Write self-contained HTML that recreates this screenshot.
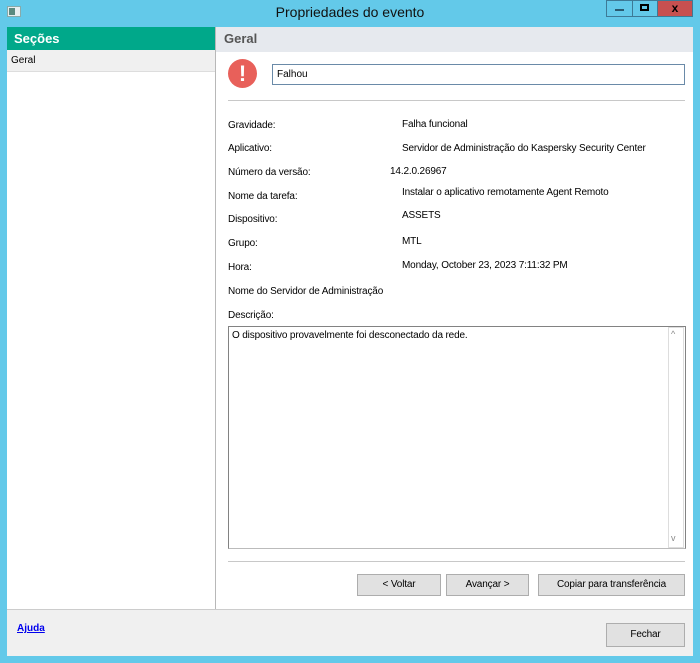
<!DOCTYPE html>
<html><head><meta charset="utf-8"><style>
*{margin:0;padding:0;box-sizing:border-box}
body{width:700px;height:663px;background:#63c9e9;position:relative;overflow:hidden;font-family:"Liberation Sans",sans-serif;font-size:11px;color:#000}
.a{position:absolute}
.t{position:absolute;font-size:10px;white-space:nowrap;letter-spacing:-0.15px}
.btn{position:absolute;background:#e1e1e1;border:1px solid #adadad;text-align:center;font-size:10px;line-height:20px;letter-spacing:-0.15px}
</style></head><body>
<div class="a" style="left:7px;top:6px;width:14px;height:11px;background:#e8eef0;border:1px solid #8aa"></div>
<div class="a" style="left:9px;top:8px;width:6px;height:7px;background:#5a8a80"></div>
<div class="a" style="left:0;top:4px;width:700px;text-align:center;font-size:14px;color:#111">Propriedades do evento</div>
<div class="a" style="left:606px;top:0;width:27px;height:17px;border:1px solid #3d7a96;background:#63c9e9"></div>
<div class="a" style="left:615px;top:9px;width:9px;height:2px;background:#2a5a70"></div>
<div class="a" style="left:632px;top:0;width:26px;height:17px;border:1px solid #3d7a96;background:#63c9e9"></div>
<div class="a" style="left:640px;top:4px;width:9px;height:7px;border:2px solid #000"></div>
<div class="a" style="left:657px;top:0;width:36px;height:17px;background:#c75050;border:1px solid #3d7a96;text-align:center;font-weight:bold;font-size:12px;line-height:15px">x</div>

<div class="a" style="left:7px;top:27px;width:686px;height:629px;background:#fff"></div>
<div class="a" style="left:7px;top:27px;width:208px;height:23px;background:#00a88a;color:#fff;font-weight:bold;font-size:13px;padding:4px 0 0 7px">Seções</div>
<div class="a" style="left:7px;top:50px;width:208px;height:22px;background:#f0f0f0;border-bottom:1px solid #ddd;padding:5px 0 0 4px;font-size:10px">Geral</div>
<div class="a" style="left:215px;top:27px;width:1px;height:583px;background:#b8b8b8"></div>
<div class="a" style="left:216px;top:27px;width:477px;height:25px;background:#e6e9ee;color:#555;font-weight:bold;font-size:13px;padding:4px 0 0 8px">Geral</div>

<div class="a" style="left:228px;top:59px;width:29px;height:29px;border-radius:50%;background:#e8605a;color:#fff;font-weight:bold;font-size:22px;text-align:center;line-height:29px">!</div>
<div class="a" style="left:272px;top:64px;width:413px;height:21px;border:1px solid #6a8aa8;padding:4px 0 0 4px;font-size:10px">Falhou</div>
<div class="a" style="left:228px;top:100px;width:457px;height:1px;background:#c8c8c8"></div>

<div class="t" style="left:228px;top:120px">Gravidade:</div><div class="t" style="left:402px;top:119px">Falha funcional</div>
<div class="t" style="left:228px;top:143px">Aplicativo:</div><div class="t" style="left:402px;top:143px">Servidor de Administração do Kaspersky Security Center</div>
<div class="t" style="left:228px;top:167px">Número da versão:</div><div class="t" style="left:390px;top:166px">14.2.0.26967</div>
<div class="t" style="left:228px;top:191px">Nome da tarefa:</div><div class="t" style="left:402px;top:187px">Instalar o aplicativo remotamente Agent Remoto</div>
<div class="t" style="left:228px;top:214px">Dispositivo:</div><div class="t" style="left:402px;top:210px">ASSETS</div>
<div class="t" style="left:228px;top:238px">Grupo:</div><div class="t" style="left:402px;top:236px">MTL</div>
<div class="t" style="left:228px;top:262px">Hora:</div><div class="t" style="left:402px;top:260px">Monday, October 23, 2023 7:11:32 PM</div>
<div class="t" style="left:228px;top:286px">Nome do Servidor de Administração</div>
<div class="t" style="left:228px;top:310px">Descrição:</div>

<div class="a" style="left:228px;top:326px;width:458px;height:223px;border:1px solid #828282;border-bottom-color:#bbb"></div>
<div class="t" style="left:232px;top:330px">O dispositivo provavelmente foi desconectado da rede.</div>
<div class="a" style="left:668px;top:327px;width:16px;height:221px;border:1px solid #ddd;background:#fff"></div>
<div class="a" style="left:671px;top:329px;font-size:9px;color:#888">^</div>
<div class="a" style="left:671px;top:533px;font-size:9px;color:#888">v</div>

<div class="a" style="left:228px;top:561px;width:457px;height:1px;background:#c8c8c8"></div>
<div class="btn" style="left:357px;top:574px;width:84px;height:22px">&lt; Voltar</div>
<div class="btn" style="left:446px;top:574px;width:83px;height:22px">Avançar &gt;</div>
<div class="btn" style="left:538px;top:574px;width:147px;height:22px">Copiar para transferência</div>

<div class="a" style="left:7px;top:609px;width:686px;height:47px;background:#f0f0f0;border-top:1px solid #ccc"></div>
<div class="a" style="left:17px;top:623px;font-size:10px;font-weight:bold;color:#0000ee;text-decoration:underline">Ajuda</div>
<div class="btn" style="left:606px;top:623px;width:79px;height:24px;line-height:22px">Fechar</div>
</body></html>
